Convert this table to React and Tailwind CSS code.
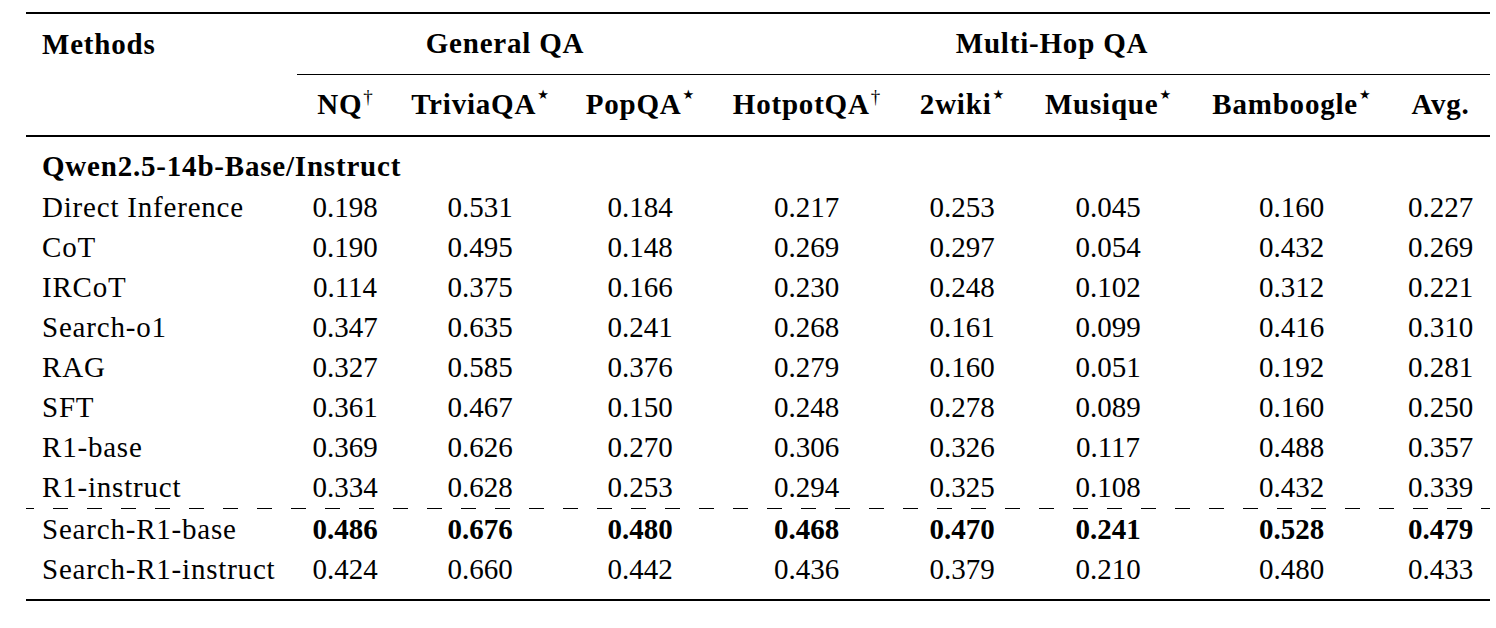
import React from "react";

const cols =
  "grid grid-cols-[271px_96px_174px_146px_187px_124px_168px_199px_99px]";

const headers = [
  { name: "NQ", mark: "†" },
  { name: "TriviaQA", mark: "★" },
  { name: "PopQA", mark: "★" },
  { name: "HotpotQA", mark: "†" },
  { name: "2wiki", mark: "★" },
  { name: "Musique", mark: "★" },
  { name: "Bamboogle", mark: "★" },
  { name: "Avg.", mark: "" },
];

const baseRows = [
  ["Direct Inference", "0.198", "0.531", "0.184", "0.217", "0.253", "0.045", "0.160", "0.227"],
  ["CoT", "0.190", "0.495", "0.148", "0.269", "0.297", "0.054", "0.432", "0.269"],
  ["IRCoT", "0.114", "0.375", "0.166", "0.230", "0.248", "0.102", "0.312", "0.221"],
  ["Search-o1", "0.347", "0.635", "0.241", "0.268", "0.161", "0.099", "0.416", "0.310"],
  ["RAG", "0.327", "0.585", "0.376", "0.279", "0.160", "0.051", "0.192", "0.281"],
  ["SFT", "0.361", "0.467", "0.150", "0.248", "0.278", "0.089", "0.160", "0.250"],
  ["R1-base", "0.369", "0.626", "0.270", "0.306", "0.326", "0.117", "0.488", "0.357"],
  ["R1-instruct", "0.334", "0.628", "0.253", "0.294", "0.325", "0.108", "0.432", "0.339"],
];

const oursRows = [
  { cells: ["Search-R1-base", "0.486", "0.676", "0.480", "0.468", "0.470", "0.241", "0.528", "0.479"], bold: true },
  { cells: ["Search-R1-instruct", "0.424", "0.660", "0.442", "0.436", "0.379", "0.210", "0.480", "0.433"], bold: false },
];

function Row({ cells, bold }) {
  return (
    <div className={`${cols} h-[40px] leading-[40px]`}>
      <div className="pl-4 tracking-[0.8px] whitespace-nowrap">{cells[0]}</div>
      {cells.slice(1).map((v, i) => (
        <div key={i} className={`text-center ${bold ? "font-bold" : ""}`}>
          {v}
        </div>
      ))}
    </div>
  );
}

export default function App() {
  return (
    <div className="min-h-screen bg-white text-black font-['Liberation_Serif','DejaVu_Serif',serif] text-[29px]">
      <div className="w-[1464px] ml-[26px] pt-3">
        <div className="h-[2px] bg-black" />

        <div className={cols}>
          <div className="h-[61px] flex items-center pl-4 font-bold tracking-[0.8px]">
            Methods
          </div>
          <div className="col-span-3 h-[61px] border-b border-black flex items-center justify-center font-bold tracking-[0.8px]">
            General QA
          </div>
          <div className="col-span-4 h-[61px] border-b border-black flex items-center justify-center font-bold tracking-[0.8px]">
            Multi-Hop QA
          </div>
          <div className="h-[61px] border-b border-black" />

          <div className="h-[60px]" />
          {headers.map((h) => (
            <div
              key={h.name}
              className="h-[60px] flex items-center justify-center font-bold tracking-[0.8px] whitespace-nowrap"
            >
              {h.name}
              {h.mark === "†" && (
                <span className="relative -top-[9px] ml-px text-[19px] font-normal leading-none tracking-normal">
                  †
                </span>
              )}
              {h.mark === "★" && (
                <span className="relative -top-[11px] ml-px text-[13px] font-normal leading-none tracking-normal font-['DejaVu_Sans',sans-serif]">
                  ★
                </span>
              )}
            </div>
          ))}
        </div>

        <div className="h-[2px] bg-black" />

        <div className="pt-[10px]">
          <div className="h-[40px] leading-[38px] pl-4 font-bold tracking-[0.8px]">
            Qwen2.5-14b-Base/Instruct
          </div>
          {baseRows.map((r) => (
            <Row key={r[0]} cells={r} />
          ))}
          <div className="h-px mt-px bg-[repeating-linear-gradient(to_right,#000_0_15px,transparent_15px_34px)] bg-[position:-7px_0]" />
          {oursRows.map((r) => (
            <Row key={r.cells[0]} cells={r.cells} bold={r.bold} />
          ))}
        </div>

        <div className="mt-[10px] h-[2px] bg-black" />
      </div>
    </div>
  );
}
